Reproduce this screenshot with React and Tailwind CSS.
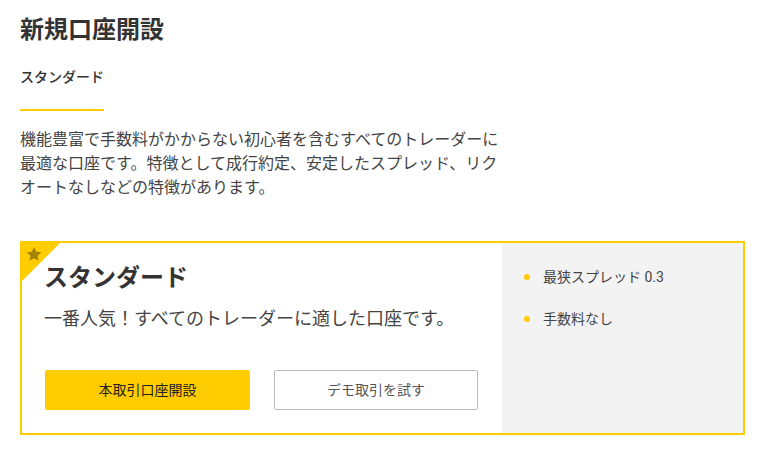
import React from "react";

const font = { fontFamily: '"Roboto", "Noto Sans CJK JP", sans-serif' };

export default function App() {
  return (
    <div
      className="w-[764px] h-[450px] bg-white text-[#333] px-[20px] pt-[12px]"
      style={font}
    >
      <h1 className="text-[24px] leading-[36px] font-bold">新規口座開設</h1>

      <div className="mt-[19px] inline-block">
        <div className="text-[14px] leading-[20px] font-medium pb-[22px]">スタンダード</div>
        <div className="h-[2px] bg-[#ffcc00]" />
      </div>

      <p className="mt-[17px] w-[490px] text-[16px] leading-[24px] text-[#444]">
        機能豊富で手数料がかからない初心者を含むすべてのトレーダーに最適な口座です。特徴として成行約定、安定したスプレッド、リクオートなしなどの特徴があります。
      </p>

      <div className="mt-[41px] w-[725px] h-[194px] border-2 border-[#ffcc00] flex relative">
        <div className="absolute left-0 top-0 w-[38px] h-[38px]">
          <svg width="38" height="38" viewBox="0 0 38 38">
            <polygon points="0,0 38,0 0,38" fill="#ffcc00" />
            <polygon
              points="12,4 14.2,8.8 19.3,9.3 15.5,12.7 16.6,17.8 12,15.2 7.4,17.8 8.5,12.7 4.7,9.3 9.8,8.8"
              fill="#a38200"
            />
          </svg>
        </div>
        <div className="w-[480px] pl-[22px] pt-[19px]">
          <h2 className="text-[24px] leading-[32px] font-bold">スタンダード</h2>
          <p className="mt-[12px] text-[18px] leading-[26px] text-[#444]">
            一番人気！すべてのトレーダーに適した口座です。
          </p>
          <div className="mt-[38px] flex gap-[24px] pl-[1px]">
            <button className="w-[205px] h-[40px] bg-[#ffcc00] rounded-[2px] text-[14px] text-[#222]">
              本取引口座開設
            </button>
            <button className="w-[204px] h-[40px] bg-white border border-[#bbb] rounded-[2px] text-[14px] text-[#555]">
              デモ取引を試す
            </button>
          </div>
        </div>
        <div className="flex-1 bg-[#f3f3f3] pl-[22px] pt-[24px]">
          <ul className="flex flex-col gap-[22px]">
            <li className="flex items-center gap-[13px] text-[14px] leading-[20px] text-[#444]">
              <span className="w-[6px] h-[6px] rounded-full bg-[#ffcc00]" />
              最狭スプレッド 0.3
            </li>
            <li className="flex items-center gap-[13px] text-[14px] leading-[20px] text-[#444]">
              <span className="w-[6px] h-[6px] rounded-full bg-[#ffcc00]" />
              手数料なし
            </li>
          </ul>
        </div>
      </div>
    </div>
  );
}
